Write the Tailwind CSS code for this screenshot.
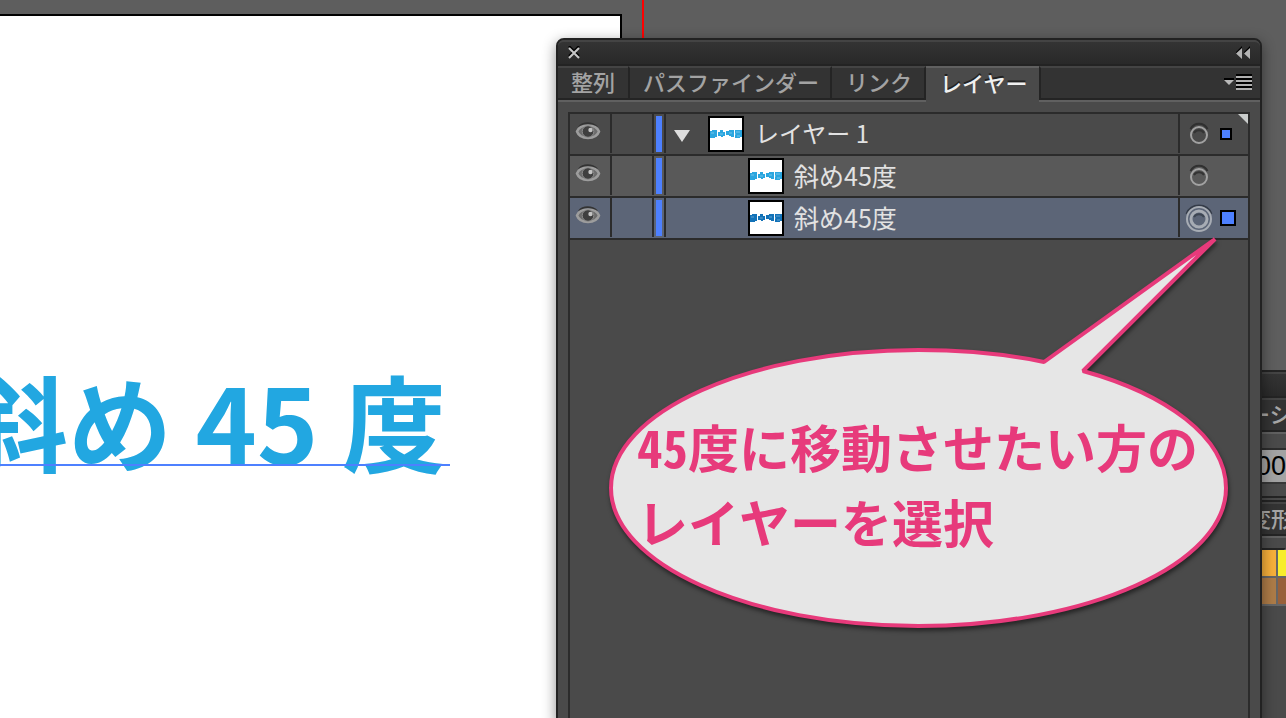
<!DOCTYPE html>
<html lang="ja">
<head>
<meta charset="utf-8">
<meta name="viewport" content="width=device-width, initial-scale=1">
<title>レイヤー</title>
<script src="https://cdn.jsdelivr.net/npm/@tailwindcss/browser@4"></script>
</head>
<body class="bg-[#5e5e5e] font-['Noto_Sans_CJK_JP',sans-serif]">
<svg class="hidden" aria-hidden="true">
  <symbol id="eye" viewBox="0 0 26 22">
    <path d="M4 6C8 1 17 1 22 6" fill="none" stroke="#333" stroke-width="2"/>
    <path d="M2 10.500C5 2.500 21 2.500 24 10.500C21 19 5 19 2 10.500Z" fill="#6c6c6c" stroke="#9d9d9d" stroke-width="2.500"/>
    <circle cx="13" cy="10.500" r="5.800" fill="#3f3f3f" stroke="#8d8d8d" stroke-width="1"/>
    <circle cx="15.500" cy="9" r="2.200" fill="#c4c4c4"/>
  </symbol>
  <symbol id="thumb" viewBox="0 0 32 10">
    <path d="M0 2h2V1h5v7H5v1H0zM8 3h2V1h3v2h2v4h-2v1h-2V7H8zM16 2h3V1h5v7h-3V7h-2V6h-3zM25 1h7v7h-2v1h-5z" fill="currentColor"/>
    <path d="M1 4h3M10 5h3M19 4h3M26 3h4M27 7h3M24 5h2" stroke="#fff" stroke-opacity=".35"/>
  </symbol>
  <symbol id="ring" viewBox="0 0 28 30">
    <path d="M5.500 10a9.500 9.500 0 0 1 17 0" fill="none" stroke="#303030" stroke-width="2"/>
    <circle cx="14" cy="16" r="8" fill="none" stroke="#a2a2a2" stroke-width="2"/>
    <path d="M9 14a6 6 0 0 1 10 0" fill="none" stroke="#333" stroke-width="2"/>
  </symbol>
  <symbol id="ring-on" viewBox="0 0 28 30">
    <path d="M2 11a13 13 0 0 1 24 0" fill="none" stroke="#343b48" stroke-width="3"/>
    <circle cx="14" cy="16" r="12" fill="none" stroke="#a7acb4" stroke-width="2"/>
    <circle cx="14" cy="16" r="8" fill="none" stroke="#a7acb4" stroke-width="3"/>
    <path d="M9 14a6 6 0 0 1 10 0" fill="none" stroke="#3d4552" stroke-width="2"/>
  </symbol>
</svg>

<main class="relative h-screen overflow-hidden">
  <!-- Artboard -->
  <section class="absolute bottom-0 left-0 top-[14px] w-[622px] overflow-hidden border-r-2 border-t-2 border-black bg-white">
    <div class="absolute -left-[36px] top-[334px] whitespace-nowrap text-[104px] font-bold leading-[140px] text-[#22a7e1]">斜め 45 度</div>
    <div class="absolute left-0 top-[448px] h-0.5 w-[450px] bg-[#4d80ff]"></div>
  </section>
  <div class="absolute left-[642px] top-0 h-[60px] w-0.5 bg-[#ff0000]"></div>

  <!-- Docked panels behind -->
  <aside class="absolute bottom-0 left-[1230px] right-0 top-[370px] overflow-hidden whitespace-nowrap border-t-2 border-[#242424] bg-[#4a4a4a] text-[22px] font-medium text-[#a6a6a6]">
    <div class="h-[26px] border-b-2 border-t-2 border-b-[#242424] border-t-[#444] bg-linear-to-b from-[#343434] to-[#2a2a2a]"></div>
    <div class="h-[34px] border-b-2 border-t-2 border-b-[#242424] border-t-[#444] bg-[#333] pl-[18px] leading-[26px]">ーション</div>
    <div class="border-t-2 border-[#606060] pb-3 pt-3.5"><input aria-label="値" value="00" class="block h-9 w-24 border-b-2 border-t-2 border-b-[#383838] border-t-[#2c2c2c] bg-[#a3a3a3] pl-[26px] font-['Liberation_Sans',sans-serif] text-[27px] font-normal text-black"></div>
    <div class="h-1.5 border-b-2 border-t-2 border-[#242424]"></div>
    <div class="h-[34px] border-b-2 border-t-2 border-b-[#242424] border-t-[#444] bg-[#333] pl-[19px] leading-[26px]">変形</div>
    <div class="border-t-2 border-[#606060] pt-2.5">
      <div class="grid grid-cols-[46px_46px] gap-0.5 border-2 border-l-0 border-[#666] border-t-[#242424] bg-[#666]">
        <div class="h-[26px] bg-[#f7b03b]"></div><div class="h-[26px] bg-[#f7ed2c]"></div>
        <div class="h-[26px] bg-[#ae7c48]"></div><div class="h-[26px] bg-[#98603a]"></div>
      </div>
    </div>
  </aside>

  <!-- Layers panel -->
  <section class="absolute -bottom-1 left-[556px] top-[38px] flex w-[706px] flex-col rounded-t-[8px] border-2 border-[#222] bg-[#4a4a4a] shadow-[0_4px_14px_rgba(0,0,0,0.45)]">
    <header class="flex h-[26px] shrink-0 items-center justify-between rounded-t-[6px] border-b-2 border-t-2 border-b-[#232323] border-t-[#444] bg-linear-to-b from-[#343434] to-[#292929] pl-[9px] pr-[9px]">
      <button aria-label="閉じる"><svg class="block" width="14" height="14" viewBox="0 0 14 14"><path d="M2 0l10 10M12 0L2 10" stroke="#000" stroke-width="2"/><path d="M2 2l10 10M12 2L2 12" stroke="#c6c6c6" stroke-width="2"/></svg></button>
      <button aria-label="折りたたむ"><svg class="block" width="16" height="14" viewBox="0 0 16 14"><path d="M7 0L1 6V8L7 3zM15 0L9 6V8L15 3z" fill="#000"/><path d="M7 2v11L1 7.500zM15 2v11L9 7.500z" fill="#b4b4b4"/></svg></button>
    </header>
    <div class="flex h-9 shrink-0 whitespace-nowrap border-b-2 border-[#606060] text-[22px] font-medium leading-[26px] text-[#a3a3a3]" role="tablist">
      <button role="tab" class="h-[34px] border-b-2 border-t-2 border-b-[#242424] border-t-[#444] bg-[#333] px-[13px] pb-1">整列</button>
      <button role="tab" class="h-[34px] border-2 border-[#242424] border-t-[#444] bg-[#333] pb-1 pl-[13px] pr-[11px]">パスファインダー</button>
      <button role="tab" class="h-[34px] border-b-2 border-r-2 border-t-2 border-[#242424] border-t-[#444] bg-[#333] pb-1 pl-3.5 pr-3">リンク</button>
      <button role="tab" aria-selected="true" class="h-9 border-t-2 border-[#606060] bg-[#4a4a4a] pb-1.5 pl-[14px] pr-3 text-[#f0f0f0] [text-shadow:0_-2px_0_#222]">レイヤー</button>
      <div class="flex h-[34px] flex-1 items-start justify-end border-b-2 border-l-2 border-t-2 border-[#242424] border-t-[#444] bg-[#333] pr-2 pt-[6px]">
        <button aria-label="パネルメニュー"><svg class="block" width="28" height="18" viewBox="0 0 28 18"><path d="M0 4h10v2H0z" fill="#000"/><path d="M0 6h10L5 11z" fill="#b9b9b9"/><path d="M12 1h16M12 5h16M12 9h16M12 13h16" stroke="#000" stroke-width="2"/><path d="M12 3h16M12 7h16M12 11h16M12 15h16" stroke="#b0b0b0" stroke-width="2"/></svg></button>
      </div>
    </div>
    <div class="relative mx-2.5 mt-2.5 flex-1 border-2 border-b-0 border-[#2b2b2b]">
      <svg class="absolute right-0 top-0" width="10" height="10"><path d="M0 0h10v10z" fill="#c9cccb"/></svg>
      <ul class="text-[25px] leading-[38px] text-[#e2e2e2]">
        <li class="flex h-[42px] border-b-2 border-[#2b2b2b] bg-[#4a4a4a]">
          <button aria-label="表示" class="h-[39px] w-[42px] border-r-2 border-[#2b2b2b] pb-1 pl-[5px]"><svg class="block" width="26" height="22"><use href="#eye"/></svg></button>
          <span class="h-[39px] w-10"></span>
          <span class="h-[39px] w-3.5 border-x-2 border-[#2b2b2b] px-0.5 py-0.5"><span class="block h-9 bg-[#4d80ff]"></span></span>
          <button aria-label="展開" class="ml-2 w-4"><svg class="mt-1 block" width="16" height="12"><path d="M0 0h16L8 12z" fill="#dedede"/></svg></button>
          <span class="ml-[18px] mt-0.5 flex h-9 w-9 items-center overflow-hidden border-2 border-black bg-white text-[#2ba6df]"><svg width="32" height="10"><use href="#thumb"/></svg></span>
          <span class="ml-[11px] flex-1 text-[24px]">レイヤー 1</span>
          <span class="flex h-[39px] w-[70px] items-center border-l-2 border-[#2b2b2b] pl-[5px]"><button aria-label="ターゲット"><svg class="block" width="28" height="30"><use href="#ring"/></svg></button><span class="ml-[7px] h-3 w-3 border-2 border-black bg-[#4d80ff]"></span></span>
        </li>
        <li class="flex h-[42px] border-b-2 border-[#2b2b2b] bg-[#595959]">
          <button aria-label="表示" class="h-[39px] w-[42px] border-r-2 border-[#2b2b2b] pb-1 pl-[5px]"><svg class="block" width="26" height="22"><use href="#eye"/></svg></button>
          <span class="h-[39px] w-10"></span>
          <span class="h-[39px] w-3.5 border-x-2 border-[#2b2b2b] px-0.5 py-0.5"><span class="block h-9 bg-[#4d80ff]"></span></span>
          <span class="ml-[82px] mt-0.5 flex h-9 w-9 items-center overflow-hidden border-2 border-black bg-white text-[#2ba6df]"><svg width="32" height="10"><use href="#thumb"/></svg></span>
          <span class="ml-2.5 flex-1">斜め45度</span>
          <span class="flex h-[39px] w-[70px] items-center border-l-2 border-[#2b2b2b] pl-[5px]"><button aria-label="ターゲット"><svg class="block" width="28" height="30"><use href="#ring"/></svg></button></span>
        </li>
        <li class="flex h-[42px] border-b-2 border-[#2b2b2b] bg-[#5c6577]">
          <button aria-label="表示" class="h-[39px] w-[42px] border-r-2 border-[#2b2b2b] pb-1 pl-[5px]"><svg class="block" width="26" height="22"><use href="#eye"/></svg></button>
          <span class="h-[39px] w-10"></span>
          <span class="h-[39px] w-3.5 border-x-2 border-[#2b2b2b] px-0.5 py-0.5"><span class="block h-9 bg-[#4d80ff]"></span></span>
          <span class="ml-[82px] mt-0.5 flex h-9 w-9 items-center overflow-hidden border-2 border-black bg-white text-[#1272b8]"><svg width="32" height="10"><use href="#thumb"/></svg></span>
          <span class="ml-2.5 flex-1">斜め45度</span>
          <span class="flex h-[39px] w-[70px] items-center border-l-2 border-[#2b2b2b] pl-[5px]"><button aria-label="ターゲット"><svg class="block" width="28" height="30"><use href="#ring-on"/></svg></button><span class="ml-[7px] h-4 w-4 border-2 border-black bg-[#4d80ff]"></span></span>
        </li>
      </ul>
    </div>
  </section>

  <!-- Speech balloon -->
  <div class="absolute left-[600px] top-[230px] h-[410px] w-[640px]">
    <svg class="absolute inset-0 drop-shadow-[1px_3px_2px_rgba(0,0,0,0.5)]" width="640" height="410" viewBox="0 0 640 410">
      <path d="M444 132L615 9L483 141C566 164 626 207 626 258C626 334 488 396 318.500 396C149 396 11 334 11 258C11 182 149 120 318.500 120C363 120 406 124 444 132Z" fill="#e6e6e6" stroke="#e73a7b" stroke-width="4" stroke-linejoin="bevel"/>
    </svg>
    <p class="relative whitespace-nowrap pl-[37px] pt-[179px] font-['Noto_Sans_Mono_CJK_JP','Noto_Sans_CJK_JP',sans-serif] text-[51px] font-bold leading-[75px] text-[#e73a7b]">45度に移動させたい方の<br>レイヤーを選択</p>
  </div>
</main>
</body>
</html>
